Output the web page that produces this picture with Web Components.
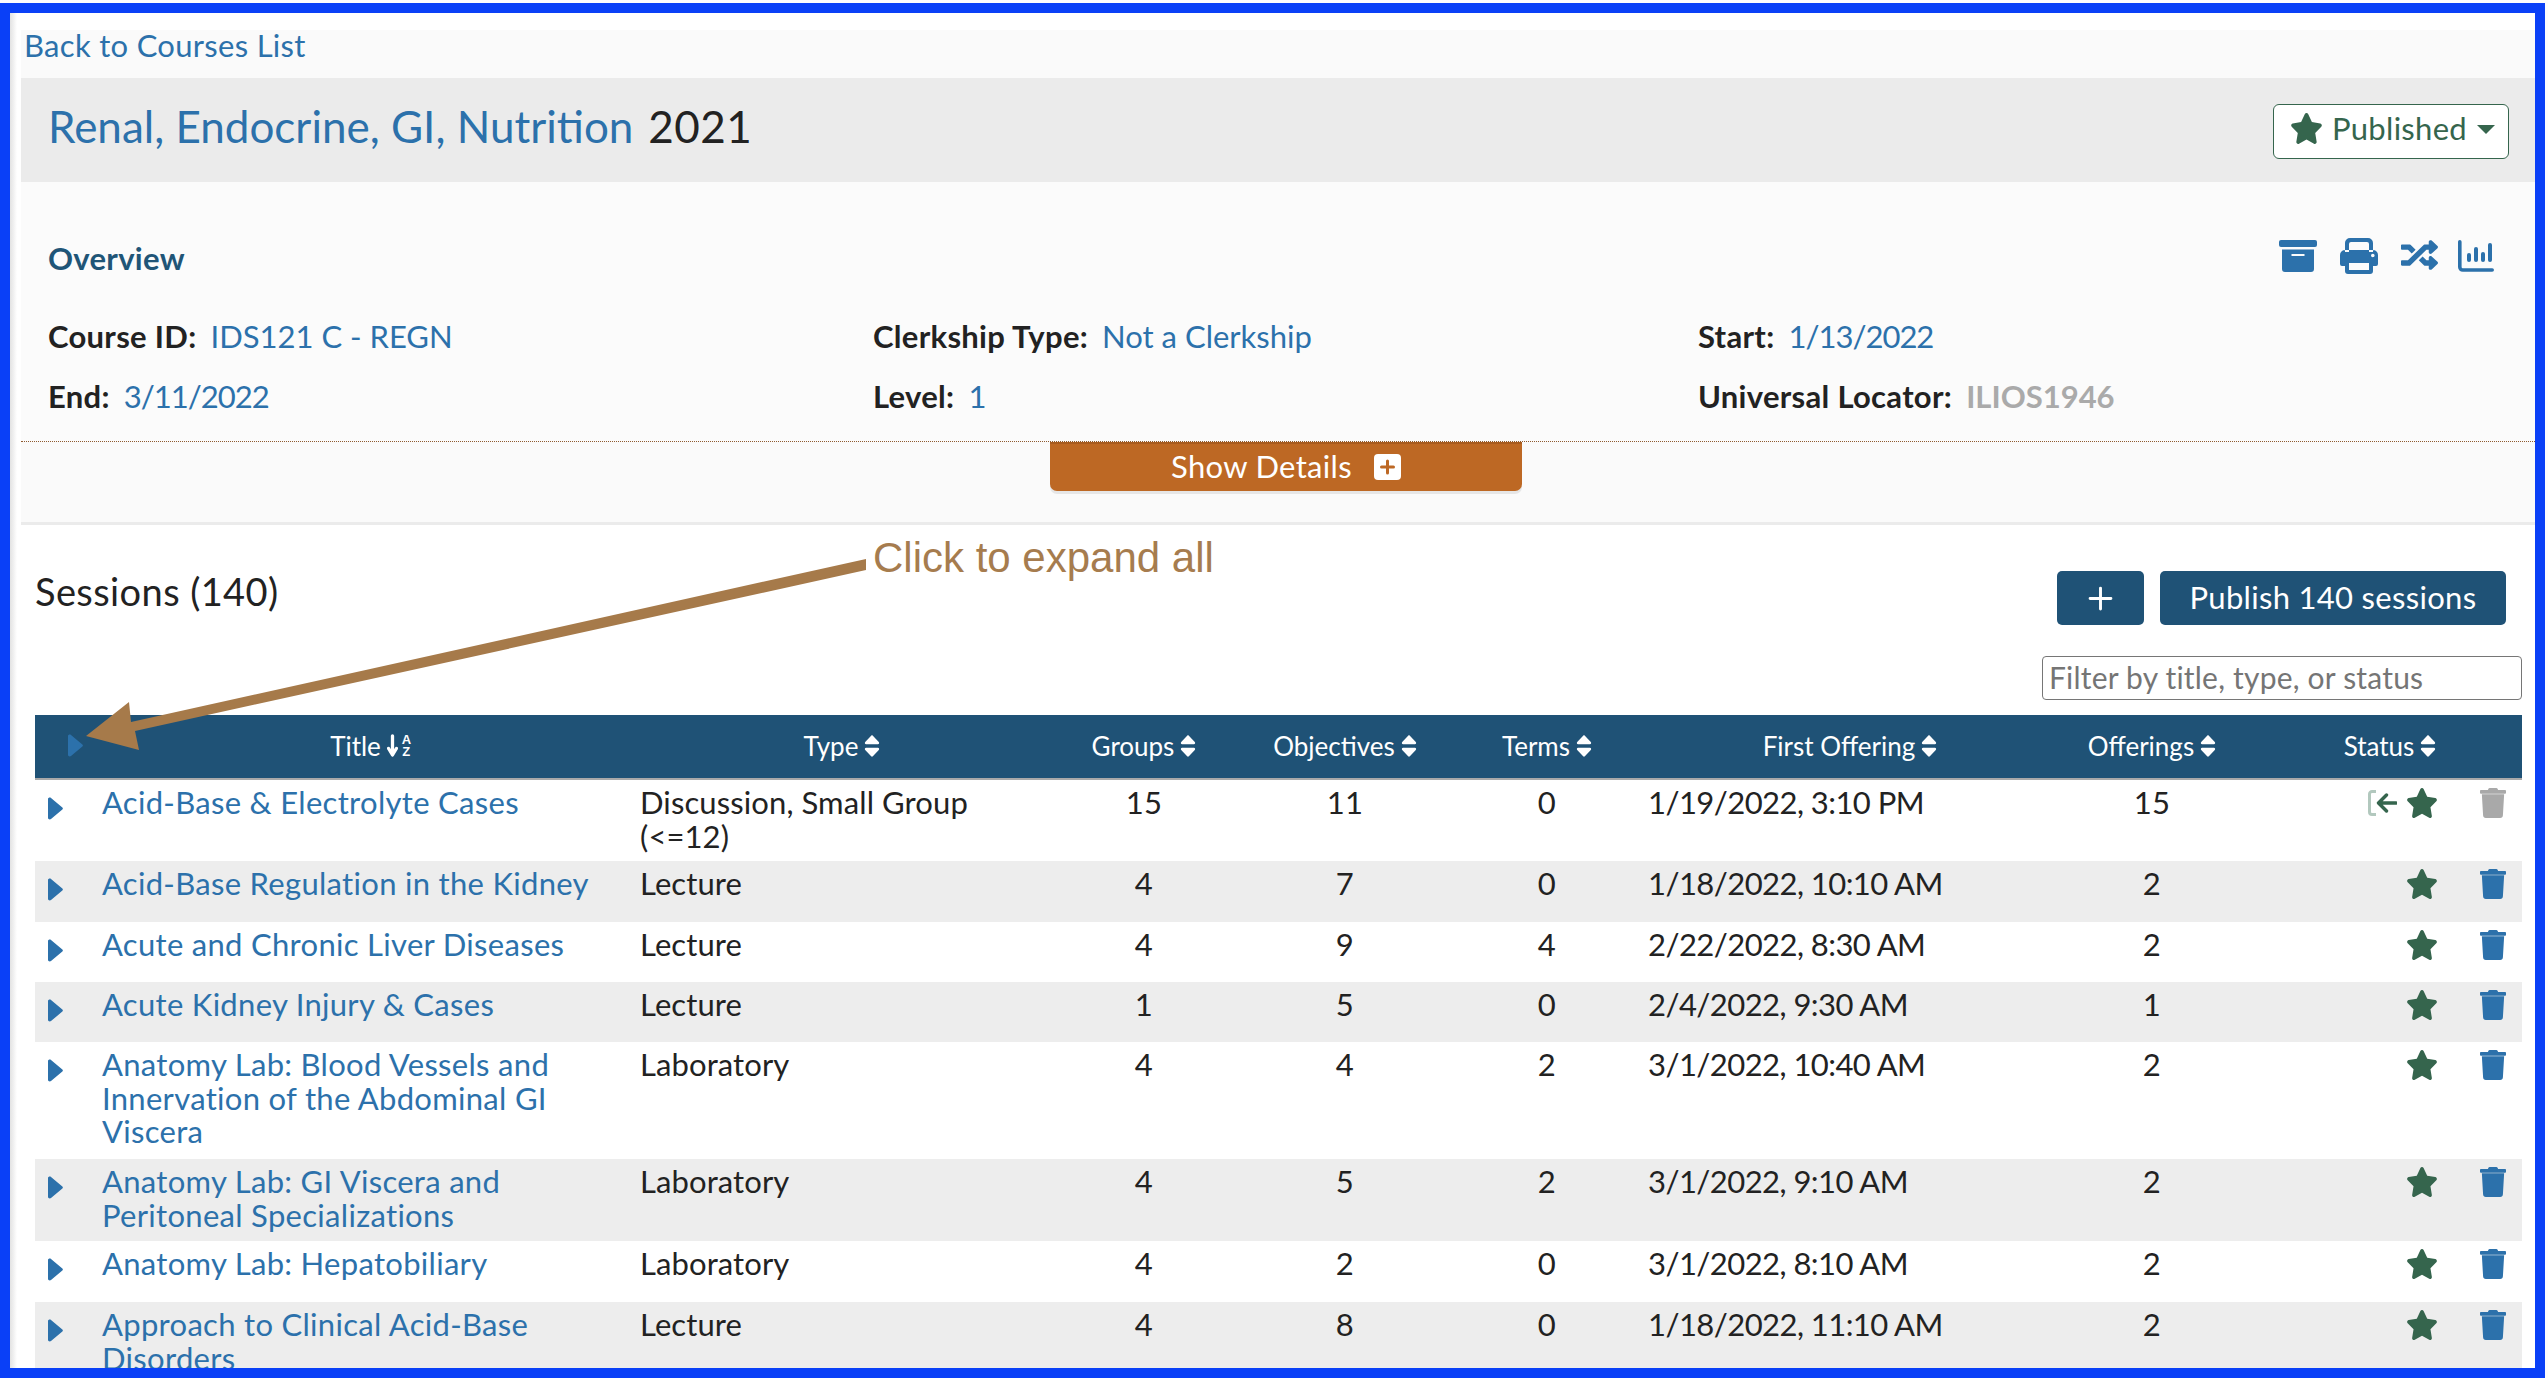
<!DOCTYPE html>
<html lang="en">
<head>
<meta charset="utf-8">
<title>Renal, Endocrine, GI, Nutrition 2021</title>
<style>
  html, body { margin: 0; padding: 0; background: #fdfdfd; overflow: hidden; }
  body { font-family: Lato, "Noto Sans", sans-serif; font-size: 31px; letter-spacing: 0.3px; color: #222; }
</style>
</head>
<body>
<course-page>
  <back-link>Back to Courses List</back-link>
  <course-header></course-header>
  <course-overview></course-overview>
  <details-toggle></details-toggle>
  <sessions-panel></sessions-panel>
  <click-callout slot="overlay"></click-callout>
</course-page>

<script>
const ICONS = {
  star: ['0 0 576 512', '<path d="M259.3 17.8L194 150.2 47.9 171.5c-26.2 3.8-36.7 36.1-17.7 54.6l105.7 103-25 145.5c-4.5 26.3 23.2 46 46.4 33.7L288 439.6l130.7 68.7c23.2 12.2 50.9-7.4 46.4-33.7l-25-145.5 105.7-103c19-18.5 8.5-50.8-17.7-54.6L382 150.2 316.7 17.8c-11.7-23.6-45.6-23.9-57.4 0z"/>'],
  trash: ['0 0 448 512', '<path d="M432 32H312l-9.4-18.7A24 24 0 0 0 281.1 0H166.8a23.72 23.72 0 0 0-21.4 13.3L136 32H16A16 16 0 0 0 0 48v32a16 16 0 0 0 16 16h416a16 16 0 0 0 16-16V48a16 16 0 0 0-16-16zM53.2 467a48 48 0 0 0 47.9 45h245.8a48 48 0 0 0 47.9-45L416 108H32z"/>'],
  caret: ['0 100 170 312', '<path d="M0 384.662V127.338c0-17.818 21.543-26.741 34.142-14.142l128.662 128.662c7.81 7.81 7.81 20.474 0 28.284L34.142 398.804C21.543 411.404 0 402.48 0 384.662z"/>'],
  sort: ['0 50 320 412', '<path d="M41 288h238c21.4 0 32.1 25.9 17 41L177 448c-9.4 9.4-24.6 9.4-33.9 0L24 329c-15.1-15.1-4.4-41 17-41zm255-105L177 64c-9.4-9.4-24.6-9.4-33.9 0L24 183c-15.1 15.1-4.4 41 17 41h238c21.4 0 32.1-25.9 17-41z"/>'],
  archive: ['0 0 38 32', '<rect x="0" y="0" width="38" height="7" rx="2"/><path fill-rule="evenodd" d="M3 9.5h32V29a3 3 0 0 1-3 3H6a3 3 0 0 1-3-3zM12.500 14h13v2h-13z"/>'],
  print: ['0 0 38 36', '<path fill-rule="evenodd" d="M5 14V5a5 5 0 0 1 5-5h18a5 5 0 0 1 5 5v9h-4V6a2 2 0 0 0-2-2H11a2 2 0 0 0-2 2v8zM5 12h28a5 5 0 0 1 5 5v9a2 2 0 0 1-2 2h-3v5a3 3 0 0 1-3 3H8a3 3 0 0 1-3-3v-5H2a2 2 0 0 1-2-2v-9a5 5 0 0 1 5-5zM9 25v7h20v-7zM31 17.500a1.800 1.800 0 1 0 3.600 0a1.800 1.800 0 1 0-3.600 0z"/>'],
  shuffle: ['0 0 512 512', '<path d="M504.971 359.029c9.373 9.373 9.373 24.569 0 33.941l-80 79.984c-15.01 15.01-40.971 4.49-40.971-16.971V416h-58.785a12.004 12.004 0 0 1-8.773-3.812l-70.556-75.596 53.333-57.143L352 336h32v-39.981c0-21.438 25.943-31.998 40.971-16.971l80 79.981zM12 176h84l52.781 56.551 53.333-57.143-70.556-75.596A11.999 11.999 0 0 0 122.785 96H12c-6.627 0-12 5.373-12 12v56c0 6.627 5.373 12 12 12zm372 0v39.984c0 21.46 25.961 31.98 40.971 16.971l80-79.984c9.373-9.373 9.373-24.569 0-33.941l-80-79.981C409.943 24.021 384 34.582 384 56.019V96h-58.785a12.004 12.004 0 0 0-8.773 3.812L96 336H12c-6.627 0-12 5.373-12 12v56c0 6.627 5.373 12 12 12h110.785c3.326 0 6.503-1.381 8.773-3.812L352 176h32z"/>'],
  chart: ['0 0 36 32', '<path d="M1.800 1.800V27a3 3 0 0 0 3 3H34.200" fill="none" stroke="currentColor" stroke-width="3.600" stroke-linecap="round"/><rect x="9" y="13" width="4" height="9" rx="2"/><rect x="16" y="7" width="4" height="15" rx="2"/><rect x="23" y="12" width="4" height="10" rx="2"/><rect x="30" y="3" width="4" height="19" rx="2"/>'],
  plus: ['0 0 24 24', '<path d="M12 2v20M2 12h20" fill="none" stroke="currentColor" stroke-width="2.800" stroke-linecap="round"/>'],
  plusbox: ['0 0 27 26', '<rect width="27" height="26" rx="4" fill="#fff"/><path d="M13.500 7v12M7.500 13h12" fill="none" stroke="#bd6824" stroke-width="3" stroke-linecap="round"/>'],
  arrowdown: ['0 0 11 23', '<path d="M5.500 1.800v19M1.600 14.500L5.500 21l3.900-6.500" fill="none" stroke="currentColor" stroke-width="3.300" stroke-linecap="round" stroke-linejoin="round"/>'],
  exit: ['0 0 29 26', '<path d="M8 1.500H4a2.500 2.500 0 0 0-2.500 2.500v18A2.500 2.500 0 0 0 4 24.500h4" fill="none" stroke="#b2c8be" stroke-width="3"/><path d="M28 13H11M18.500 5L10.500 13l8 8" fill="none" stroke="#35654d" stroke-width="3.400" stroke-linecap="round" stroke-linejoin="round"/>']
};

class UiIcon extends HTMLElement {
  connectedCallback() {
    const [box, body] = ICONS[this.getAttribute('name')];
    this.attachShadow({ mode: 'open' }).innerHTML = `
      <style>
        :host { display: inline-flex; flex: none; line-height: 0; }
        svg { width: 100%; height: 100%; fill: currentColor; display: block; }
      </style>
      <svg viewBox="${box}" preserveAspectRatio="none" aria-hidden="true">${body}</svg>`;
  }
}

class CoursePage extends HTMLElement {
  constructor() {
    super();
    this.attachShadow({ mode: 'open' }).innerHTML = `
      <style>
        :host {
          display: block;
          box-sizing: border-box;
          position: relative;
          width: 2545px;
          height: 1375px;
          margin-top: 3px;
          border: 10px solid #0a40f7;
          background: #fff;
          overflow: hidden;
        }
        .shade {
          position: absolute;
          left: 0; top: 0; bottom: 0;
          width: 7px;
          background: linear-gradient(90deg, #e2e2e2, #ffffff);
        }
        .inner { padding: 17px 0 0 11px; }
      </style>
      <div class="shade"></div>
      <div class="inner"><slot></slot></div>
      <slot name="overlay"></slot>`;
  }
}

class BackLink extends HTMLElement {
  constructor() {
    super();
    this.attachShadow({ mode: 'open' }).innerHTML = `
      <style>
        :host {
          display: flex;
          align-items: center;
          height: 48px;
          padding: 0 0 18px 3px;
          box-sizing: border-box;
          background: #fafafa;
          color: #2c71ab;
        }
      </style>
      <slot></slot>`;
  }
}

class CourseHeader extends HTMLElement {
  constructor() {
    super();
    this.attachShadow({ mode: 'open' }).innerHTML = `
      <style>
        :host {
          display: flex;
          align-items: center;
          justify-content: space-between;
          height: 104px;
          padding: 0 26px 0 27px;
          box-sizing: border-box;
          background: #ebebeb;
        }
        h2 { margin: 0 0 9px; font-size: 44px; font-weight: 400; letter-spacing: 0; color: #2c71ab; }
        h2 b { font-weight: 400; color: #222; margin-left: 3px; letter-spacing: 0.5px; }
        .status {
          display: flex;
          align-items: center;
          box-sizing: border-box;
          width: 236px;
          height: 55px;
          margin-top: 2px;
          padding: 0 0 7px 16px;
          background: #fff;
          border: 1.5px solid #35654d;
          border-radius: 6px;
          color: #35654d;
        }
        ui-icon.star { width: 33px; height: 31px; margin: 2px 9px 0 0; }
        .caret { margin: 4px 0 0 10px; width: 0; height: 0; border: 9px solid transparent; border-top: 9px solid #35654d; border-bottom: 0; }
      </style>
      <h2>Renal, Endocrine, GI, Nutrition<b> 2021</b></h2>
      <div class="status"><ui-icon class="star" name="star"></ui-icon>Published<span class="caret"></span></div>`;
  }
}

class CourseOverview extends HTMLElement {
  constructor() {
    super();
    const fields = [
      ['Course ID:', 'IDS121 C - REGN'],
      ['Clerkship Type:', 'Not a Clerkship'],
      ['Start:', '1/13/2022', 'date'],
      ['End:', '3/11/2022', 'date'],
      ['Level:', '1'],
      ['Universal Locator:', 'ILIOS1946', 'muted']
    ];
    this.attachShadow({ mode: 'open' }).innerHTML = `
      <style>
        :host {
          display: block;
          box-sizing: border-box;
          height: 259px;
          padding: 54px 41px 0 27px;
          background: #fbfbfb;
        }
        .top { display: flex; justify-content: space-between; align-items: flex-start; height: 44px; }
        h3 { margin: 0; font-size: 31px; line-height: 44px; font-weight: 700; color: #1f5577; }
        .tools { display: flex; margin-top: 2px; color: #2c71ab; }
        .tools ui-icon { height: 34px; }
        .tools .a { width: 38px; height: 32px; margin-top: 2px; }
        .tools .p { width: 38px; height: 36px; margin-left: 23px; }
        .tools .s { width: 37px; margin-left: 23px; }
        .tools .c { width: 36px; height: 32px; margin-top: 2px; margin-left: 20px; }
        .grid { display: grid; grid-template-columns: 825px 825px 1fr; grid-auto-rows: 60px; margin-top: 26px; }
        .f { display: flex; align-items: center; white-space: nowrap; }
        label { font-weight: 700; color: #222; margin-right: 14px; }
        span { color: #2c71ab; letter-spacing: 0; }
        span.date { letter-spacing: -1px; }
        span.muted { color: #aaa; font-weight: 700; }
      </style>
      <div class="top">
        <h3>Overview</h3>
        <div class="tools">
          <ui-icon class="a" name="archive"></ui-icon>
          <ui-icon class="p" name="print"></ui-icon>
          <ui-icon class="s" name="shuffle"></ui-icon>
          <ui-icon class="c" name="chart"></ui-icon>
        </div>
      </div>
      <div class="grid">
        ${fields.map(([k, v, c]) => `<div class="f"><label>${k}</label><span class="${c || ''}">${v}</span></div>`).join('')}
      </div>`;
  }
}

class DetailsToggle extends HTMLElement {
  constructor() {
    super();
    this.attachShadow({ mode: 'open' }).innerHTML = `
      <style>
        :host {
          display: block;
          box-sizing: border-box;
          height: 84px;
          border-top: 1px dotted #8f5a30;
          border-bottom: 3px solid #ebebeb;
          background: #fafafa;
        }
        button {
          display: flex;
          align-items: center;
          justify-content: center;
          gap: 22px;
          box-sizing: border-box;
          width: 472px;
          height: 49px;
          margin: 0 0 0 1029px;
          padding: 0 0 4px;
          border: 0;
          border-top: 2px solid #a85c20;
          border-radius: 0 0 7px 7px;
          background: #bd6824;
          box-shadow: 0 3px 0 #e6e6e6;
          color: #fff;
          font: inherit;
          letter-spacing: inherit;
        }
        ui-icon { width: 27px; height: 26px; margin-top: 2px; }
      </style>
      <button>Show Details <ui-icon name="plusbox"></ui-icon></button>`;
  }
}

class SessionsPanel extends HTMLElement {
  constructor() {
    super();
    this.attachShadow({ mode: 'open' }).innerHTML = `
      <style>
        :host { display: block; padding: 46px 13px 0 14px; background: #fff; }
        .head { display: flex; justify-content: space-between; align-items: flex-start; height: 54px; }
        h2 { margin: -1px 0 0; font-size: 38px; line-height: 42px; font-weight: 400; letter-spacing: 0.4px; color: #222; }
        .actions { display: flex; gap: 16px; margin-right: 16px; }
        button {
          display: flex; align-items: center; justify-content: center;
          box-sizing: border-box;
          height: 54px;
          border: 0;
          border-radius: 5px;
          background: #1f5276;
          color: #fff;
          font: inherit;
          letter-spacing: inherit;
        }
        .add { width: 87px; }
        .add ui-icon { width: 25px; height: 25px; }
        .publish { width: 346px; padding-bottom: 4px; }
        .filter { display: flex; justify-content: flex-end; margin-top: 31px; }
        input {
          box-sizing: border-box;
          width: 480px;
          height: 44px;
          padding: 0 6px 2px;
          border: 1.5px solid #767676;
          border-radius: 4px;
          font: inherit;
          font-size: 30px;
          letter-spacing: 0.2px;
          background: #fff;
        }
        input::placeholder { color: #757575; opacity: 1; }
        sessions-table { margin-top: 15px; }
      </style>
      <div class="head">
        <h2>Sessions (140)</h2>
        <div class="actions">
          <button class="add"><ui-icon name="plus"></ui-icon></button>
          <button class="publish">Publish 140 sessions</button>
        </div>
      </div>
      <div class="filter"><input placeholder="Filter by title, type, or status"></div>
      <sessions-table></sessions-table>`;
  }
}

const GRID = '67px 538px 404px 200px 202px 202px 404px 200px 1fr';

class SessionsTable extends HTMLElement {
  constructor() {
    super();
    const rows = [
      { h: 81, t: 'Acid-Base &amp; Electrolyte Cases', y: 'Discussion, Small Group (&lt;=12)', g: 15, o: 11, m: 0, f: '1/19/2022, 3:10 PM', n: 15, draft: 1 },
      { h: 61, t: 'Acid-Base Regulation in the Kidney', y: 'Lecture', g: 4, o: 7, m: 0, f: '1/18/2022, 10:10 AM', n: 2 },
      { h: 60, t: 'Acute and Chronic Liver Diseases', y: 'Lecture', g: 4, o: 9, m: 4, f: '2/22/2022, 8:30 AM', n: 2 },
      { h: 60, t: 'Acute Kidney Injury &amp; Cases', y: 'Lecture', g: 1, o: 5, m: 0, f: '2/4/2022, 9:30 AM', n: 1 },
      { h: 117, t: 'Anatomy Lab: Blood Vessels and Innervation of the Abdominal GI Viscera', y: 'Laboratory', g: 4, o: 4, m: 2, f: '3/1/2022, 10:40 AM', n: 2 },
      { h: 82, t: 'Anatomy Lab: GI Viscera and Peritoneal Specializations', y: 'Laboratory', g: 4, o: 5, m: 2, f: '3/1/2022, 9:10 AM', n: 2 },
      { h: 61, t: 'Anatomy Lab: Hepatobiliary', y: 'Laboratory', g: 4, o: 2, m: 0, f: '3/1/2022, 8:10 AM', n: 2 },
      { h: 82, t: 'Approach to Clinical Acid-Base Disorders', y: 'Lecture', g: 4, o: 8, m: 0, f: '1/18/2022, 11:10 AM', n: 2 }
    ];
    const sort = label => `<div class="th"><span>${label}</span><ui-icon class="sort" name="sort"></ui-icon></div>`;
    this.attachShadow({ mode: 'open' }).innerHTML = `
      <style>
        :host { display: block; }
        .head {
          display: grid;
          grid-template-columns: ${GRID};
          height: 65px;
          box-sizing: border-box;
          border-bottom: 2px solid #a9a9a9;
          background: #1f5276;
          color: #fff;
          font-size: 26px;
          letter-spacing: 0;
        }
        .th { display: flex; align-items: center; justify-content: center; gap: 6px; padding-bottom: 2px; }
        .th:first-child { justify-content: flex-start; padding-left: 33px; color: #2c71ab; }
        .th:first-child ui-icon { width: 15px; height: 23px; }
        .th:last-child { padding-left: 6px; }
        .sort { width: 16px; height: 22px; }
        .az { display: inline-flex; align-items: center; gap: 3px; }
        .az ui-icon { width: 11px; height: 23px; }
        .az i { display: flex; flex-direction: column; font: 700 13px/12px "Liberation Sans", sans-serif; font-style: normal; text-align: center; }
        .az b { width: 11px; }
      </style>
      <div class="head">
        <div class="th"><ui-icon name="caret"></ui-icon></div>
        <div class="th"><span>Title</span><span class="az"><ui-icon name="arrowdown"></ui-icon><i><b>A</b><b>Z</b></i></span></div>
        ${sort('Type')}${sort('Groups')}${sort('Objectives')}${sort('Terms')}${sort('First Offering')}${sort('Offerings')}${sort('Status')}
      </div>
      ${rows.map((r, i) => `<session-row style="min-height:${r.h}px" ${i % 2 ? 'striped' : ''} ${r.draft ? 'draft' : ''}
        data-t="${r.t.replace(/&/g, '&amp;')}" data-y="${r.y.replace(/&/g, '&amp;')}" data-g="${r.g}" data-o="${r.o}" data-m="${r.m}" data-f="${r.f}" data-n="${r.n}"></session-row>`).join('')}`;
  }
}

class SessionRow extends HTMLElement {
  connectedCallback() {
    const d = this.dataset;
    const draft = this.hasAttribute('draft');
    this.attachShadow({ mode: 'open' }).innerHTML = `
      <style>
        :host {
          display: grid;
          grid-template-columns: ${GRID};
          box-sizing: border-box;
          background: #fff;
          line-height: 33.500px;
          color: #222;
        }
        :host([striped]) { background: #ededed; }
        div { padding-top: 6px; }
        .exp { display: flex; align-items: flex-start; padding: 17px 0 0 13px; color: #2c71ab; }
        .exp ui-icon { width: 15px; height: 23px; }
        .title { color: #2c71ab; padding-right: 36px; }
        .type { letter-spacing: 0.1px; }
        .date { letter-spacing: -0.55px; }
        .num { text-align: center; }
        .state { display: flex; justify-content: flex-end; align-items: flex-start; padding: 8px 16px 0 0; }
        .exit { width: 29px; height: 26px; margin: 2px 9px 0 0; }
        .star { width: 32px; height: 30px; color: #35654d; }
        .trash { width: 26px; height: 30px; margin-left: 42px; color: ${draft ? '#a9a9a9' : '#2c71ab'}; }
      </style>
      <div class="exp"><ui-icon name="caret"></ui-icon></div>
      <div class="title">${d.t}</div>
      <div class="type">${d.y}</div>
      <div class="num">${d.g}</div>
      <div class="num">${d.o}</div>
      <div class="num">${d.m}</div>
      <div class="date">${d.f}</div>
      <div class="num">${d.n}</div>
      <div class="state">
        ${draft ? '<ui-icon class="exit" name="exit"></ui-icon>' : ''}
        <ui-icon class="star" name="star"></ui-icon>
        <ui-icon class="trash" name="trash"></ui-icon>
      </div>`;
  }
}

// annotation drawn on top of the page, coordinates are page pixels less the frame
class ClickCallout extends HTMLElement {
  constructor() {
    super();
    this.attachShadow({ mode: 'open' }).innerHTML = `
      <style>
        :host { position: absolute; left: -10px; top: -13px; width: 2548px; height: 1378px; pointer-events: none; }
        svg { position: absolute; left: 0; top: 0; }
        span {
          position: absolute;
          left: 873px;
          top: 534px;
          font: 42px/48px "Liberation Sans", Arial, sans-serif;
          letter-spacing: 0;
          color: #a67c4e;
          white-space: nowrap;
        }
      </style>
      <svg width="2548" height="1378" viewBox="0 0 2548 1378">
        <polygon fill="#a67a4a" points="866,559 866,570 135,731 139,750 86,736 129,702 131,722"/>
      </svg>
      <span>Click to expand all</span>`;
  }
}

customElements.define('ui-icon', UiIcon);
customElements.define('course-page', CoursePage);
customElements.define('back-link', BackLink);
customElements.define('course-header', CourseHeader);
customElements.define('course-overview', CourseOverview);
customElements.define('details-toggle', DetailsToggle);
customElements.define('sessions-panel', SessionsPanel);
customElements.define('sessions-table', SessionsTable);
customElements.define('session-row', SessionRow);
customElements.define('click-callout', ClickCallout);
</script>
</body>
</html>
